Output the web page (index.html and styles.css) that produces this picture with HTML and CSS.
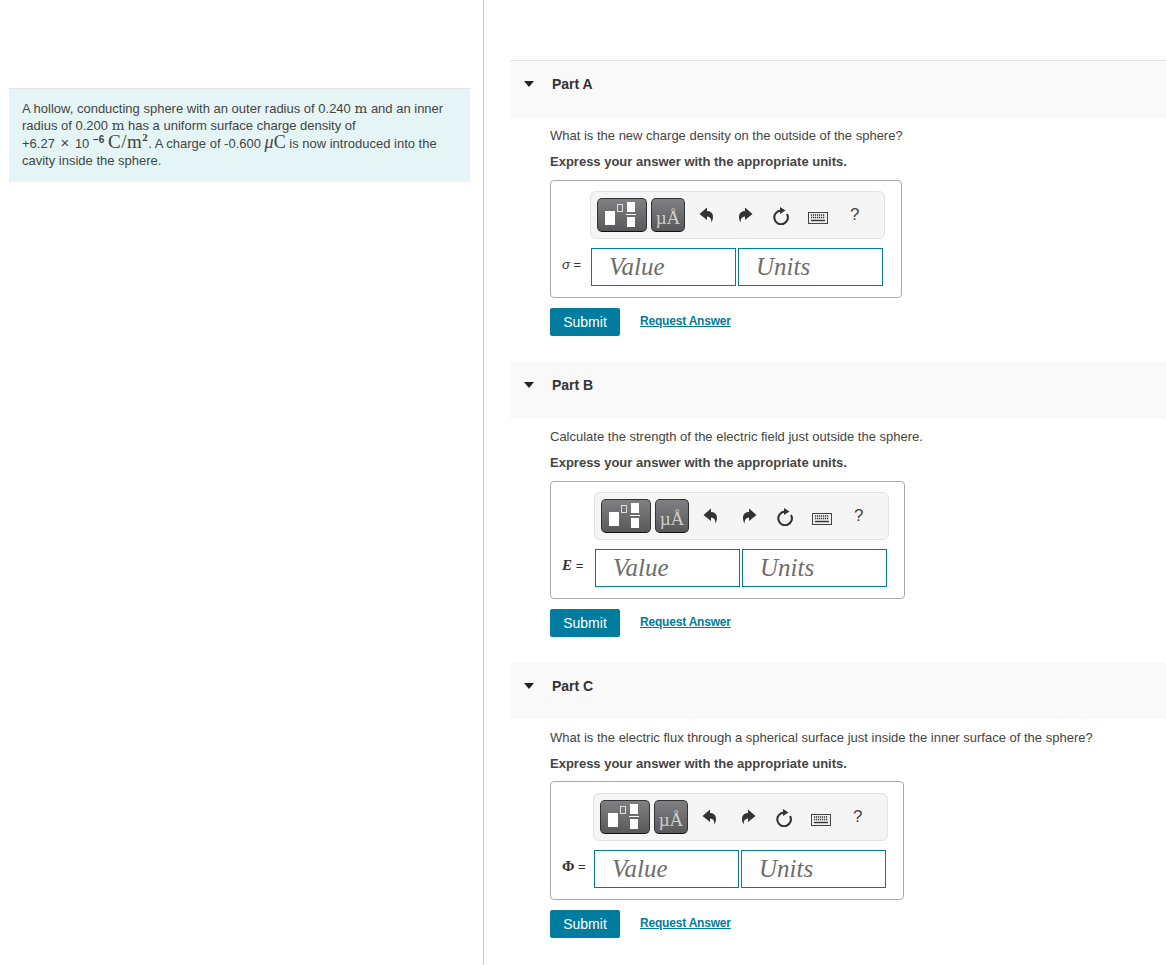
FILE: index.html
```html
<!DOCTYPE html>
<html>
<head>
    <title>Part A</title>
    <link rel="stylesheet" href="styles.css">
</head>
<body>
    <svg class="defs" width="0" height="0">
        <symbol id="undo" viewBox="0 0 16 16"><path d="M8 0.5 L0.5 7 L8 13 V9.5 C11 9.5 12.5 11.5 12.5 15.5 C15 11 15 4 8 4 Z"/></symbol>
        <symbol id="redo" viewBox="0 0 16 16"><path d="M8 0.5 L15.5 7 L8 13 V9.5 C5 9.5 3.5 11.5 3.5 15.5 C1 11 1 4 8 4 Z"/></symbol>
        <symbol id="reset" viewBox="0 0 18 18"><path d="M9 3.6 A6.8 6.8 0 1 0 15 7" fill="none" stroke="#333" stroke-width="2.1"/><path d="M8 0 L13.5 3.4 L8 7 Z"/></symbol>
        <symbol id="keys" viewBox="0 0 20 12"><rect x="0.5" y="0.5" width="19" height="11" fill="#eee" stroke="#444"/><path d="M3 3h14M3 5.5h14" stroke="#333" stroke-width="1.3" stroke-dasharray="1.2 .8"/><path d="M3 8.5h14" stroke="#333" stroke-width="1.4"/></symbol>
    </svg>

    <div class="left-pane">
        <div class="statement">
            A hollow, conducting sphere with an outer radius of 0.240 <span class="unit">m</span> and an inner radius of 0.200 <span class="unit">m</span> has a uniform surface charge density of<br>
            +6.27 <span class="times">&times;</span> 10 <sup class="exp">&minus;6</sup> <span class="unit big">C/m<sup>2</sup></span>. A charge of -0.600 <span class="unit mid"><i>&mu;</i>C</span> is now introduced into the cavity inside the sphere.
        </div>
    </div>

    <div class="right-pane">
        <section class="part part-a">
            <div class="part-head"><span class="caret"></span><span class="part-title">Part A</span></div>
            <div class="part-body">
                <p class="question">What is the new charge density on the outside of the sphere?</p>
                <p class="express">Express your answer with the appropriate units.</p>
                <div class="answer-box">
                    <div class="answer-label"><i>&sigma;</i> =</div>
                    <div class="answer-main">
                        <div class="toolbar">
                            <div class="tool-btn tpl"><span class="sq"></span><span class="sup-sq"></span><span class="frac"><b></b><em></em><b></b></span></div>
                            <div class="tool-btn mu">&micro;&Aring;</div>
                            <svg class="ic ic-undo"><use href="#undo"/></svg>
                            <svg class="ic ic-redo"><use href="#redo"/></svg>
                            <svg class="ic ic-reset"><use href="#reset"/></svg>
                            <svg class="ic ic-keys"><use href="#keys"/></svg>
                            <span class="help">?</span>
                        </div>
                        <div class="inputs"><div class="field">Value</div><div class="field">Units</div></div>
                    </div>
                </div>
                <div class="actions"><button class="submit">Submit</button><a class="req" href="#">Request Answer</a></div>
            </div>
        </section>

        <section class="part part-b">
            <div class="part-head"><span class="caret"></span><span class="part-title">Part B</span></div>
            <div class="part-body">
                <p class="question">Calculate the strength of the electric field just outside the sphere.</p>
                <p class="express">Express your answer with the appropriate units.</p>
                <div class="answer-box">
                    <div class="answer-label"><i class="serif">E</i> =</div>
                    <div class="answer-main">
                        <div class="toolbar">
                            <div class="tool-btn tpl"><span class="sq"></span><span class="sup-sq"></span><span class="frac"><b></b><em></em><b></b></span></div>
                            <div class="tool-btn mu">&micro;&Aring;</div>
                            <svg class="ic ic-undo"><use href="#undo"/></svg>
                            <svg class="ic ic-redo"><use href="#redo"/></svg>
                            <svg class="ic ic-reset"><use href="#reset"/></svg>
                            <svg class="ic ic-keys"><use href="#keys"/></svg>
                            <span class="help">?</span>
                        </div>
                        <div class="inputs"><div class="field">Value</div><div class="field">Units</div></div>
                    </div>
                </div>
                <div class="actions"><button class="submit">Submit</button><a class="req" href="#">Request Answer</a></div>
            </div>
        </section>

        <section class="part part-c">
            <div class="part-head"><span class="caret"></span><span class="part-title">Part C</span></div>
            <div class="part-body">
                <p class="question">What is the electric flux through a spherical surface just inside the inner surface of the sphere?</p>
                <p class="express">Express your answer with the appropriate units.</p>
                <div class="answer-box">
                    <div class="answer-label"><span class="serif">&Phi;</span> =</div>
                    <div class="answer-main">
                        <div class="toolbar">
                            <div class="tool-btn tpl"><span class="sq"></span><span class="sup-sq"></span><span class="frac"><b></b><em></em><b></b></span></div>
                            <div class="tool-btn mu">&micro;&Aring;</div>
                            <svg class="ic ic-undo"><use href="#undo"/></svg>
                            <svg class="ic ic-redo"><use href="#redo"/></svg>
                            <svg class="ic ic-reset"><use href="#reset"/></svg>
                            <svg class="ic ic-keys"><use href="#keys"/></svg>
                            <span class="help">?</span>
                        </div>
                        <div class="inputs"><div class="field">Value</div><div class="field">Units</div></div>
                    </div>
                </div>
                <div class="actions"><button class="submit">Submit</button><a class="req" href="#">Request Answer</a></div>
            </div>
        </section>
    </div>
</body>
</html>
```

FILE: styles.css
```css
html, body {
    margin: 0;
    padding: 0;
    height: 965px;
    overflow: hidden;
}

body {
    display: flex;
    font-family: "Liberation Sans", Arial, sans-serif;
    font-size: 13px;
    color: #333;
    background-color: #fff;
}

.defs {
    position: absolute;
}

.left-pane {
    flex-shrink: 0;
    box-sizing: border-box;
    width: 484px;
    height: 965px;
    padding-top: 88px;
    border-right: 1px solid #c8c8c8;
}

.statement {
    box-sizing: border-box;
    width: 461px;
    height: 94px;
    margin-left: 9px;
    padding: 11px 13px 0;
    background-color: #e5f5f6;
    border-top: 1px solid #dfe5e5;
    font-size: 13px;
    line-height: 17.3px;
    color: #444;
}

.unit {
    font-family: "DejaVu Serif", "Liberation Serif", serif;
    font-size: 13.5px;
    line-height: 10px;
}

.unit.big {
    font-family: "Liberation Serif", serif;
    font-size: 19px;
    letter-spacing: 0.5px;
}

.unit.mid {
    font-family: "Liberation Serif", serif;
    font-size: 18px;
}

.unit sup {
    font-size: 11px;
    font-weight: bold;
    line-height: 0;
}

.times {
    margin: 0 2px;
    font-size: 15px;
    line-height: 10px;
}

.exp {
    font-size: 10px;
    font-weight: bold;
    line-height: 0;
}

.right-pane {
    flex: 1;
    margin-left: 26px;
    padding-top: 60px;
}

.part {
    margin-bottom: 26px;
}

.part-head {
    display: flex;
    align-items: flex-start;
    box-sizing: border-box;
    height: 57px;
    padding-top: 15px;
    background-color: #f9f9f9;
}

.part-a .part-head {
    height: 58px;
    border-top: 1px solid #e0e0e0;
}

.part-c .part-head {
    height: 56px;
}

.caret {
    width: 0;
    height: 0;
    margin: 5px 0 0 14px;
    border-left: 5.5px solid transparent;
    border-right: 5.5px solid transparent;
    border-top: 6px solid #222;
}

.part-title {
    margin-left: 18px;
    font-size: 14px;
    font-weight: bold;
    line-height: 16px;
    color: #333;
}

.part-body {
    padding: 9px 0 0 40px;
}

.part-c .part-body {
    padding-top: 10px;
}

.question {
    margin: 0;
    font-size: 13px;
    line-height: 17px;
    color: #444;
}

.express {
    margin: 9px 0 10px;
    font-size: 13px;
    font-weight: bold;
    line-height: 17px;
    color: #444;
}

.part-c .express {
    margin-bottom: 9px;
}

.answer-box {
    display: inline-flex;
    align-items: flex-start;
    box-sizing: border-box;
    height: 118px;
    padding: 10px 16px 0 11px;
    border: 1px solid #aaa;
    border-radius: 4px;
    vertical-align: top;
}

.part-b .answer-box {
    padding-right: 15px;
}

.part-c .answer-box {
    height: 119px;
    padding-top: 11px;
    padding-right: 15px;
}

.answer-label {
    min-width: 28px;
    padding-top: 65px;
    font-size: 13px;
    line-height: 17px;
    color: #333;
    white-space: nowrap;
}

.serif {
    font-family: "Liberation Serif", serif;
    font-weight: bold;
    font-size: 15px;
}

.answer-main {
    width: 295px;
}

.part-b .answer-main {
    margin-left: 4px;
}

.part-c .answer-main {
    margin-left: 3px;
}

.toolbar {
    position: relative;
    box-sizing: border-box;
    width: 295px;
    height: 48px;
    background-color: #f5f5f5;
    border: 1px solid #e2e2e2;
    border-radius: 6px;
}

.tool-btn {
    position: absolute;
    top: 6px;
    box-sizing: border-box;
    height: 34px;
    background: linear-gradient(#808082, #59595b);
    border: 1px solid #333;
    border-bottom-color: #111;
    border-radius: 5px;
}

.tpl {
    left: 6px;
    width: 50px;
}

.tpl .sq {
    position: absolute;
    left: 7px;
    top: 12px;
    width: 10px;
    height: 14px;
    background-color: #fff;
}

.tpl .sup-sq {
    position: absolute;
    left: 19px;
    top: 5px;
    width: 4px;
    height: 6px;
    border: 1px solid #ddd;
}

.frac {
    position: absolute;
    left: 29px;
    top: 3px;
    width: 8px;
}

.frac b {
    display: block;
    height: 10px;
    background-color: #fff;
}

.frac em {
    display: block;
    height: 1px;
    margin: 2px -1px;
    background-color: #fff;
}

.mu {
    left: 60px;
    width: 34px;
    font-family: "Liberation Serif", serif;
    font-size: 19px;
    line-height: 37px;
    text-align: center;
    color: #ccc;
}

.ic {
    position: absolute;
    fill: #333;
}

.ic-undo {
    left: 108px;
    top: 15px;
    width: 16px;
    height: 16px;
}

.ic-redo {
    left: 146px;
    top: 15px;
    width: 16px;
    height: 16px;
}

.ic-reset {
    left: 181px;
    top: 15px;
    width: 18px;
    height: 18px;
}

.ic-keys {
    left: 217px;
    top: 20px;
    width: 20px;
    height: 12px;
}

.help {
    position: absolute;
    left: 259px;
    top: 14px;
    font-size: 17px;
    line-height: 18px;
    color: #444;
}

.inputs {
    display: flex;
    gap: 2px;
    margin: 9px 0 0 1px;
}

.field {
    box-sizing: border-box;
    width: 145px;
    height: 38px;
    padding-left: 17px;
    border: 1px solid #007c9e;
    background-color: #fff;
    font-family: "Liberation Serif", serif;
    font-style: italic;
    font-size: 25px;
    line-height: 35px;
    color: #6d6d6d;
}

.actions {
    display: flex;
    align-items: flex-start;
    margin-top: 10px;
}

.submit {
    width: 70px;
    height: 28px;
    padding: 0;
    border: none;
    border-radius: 2px;
    background-color: #007c9e;
    color: #fff;
    font-family: "Liberation Sans", Arial, sans-serif;
    font-size: 14px;
}

.req {
    margin-top: 5px;
    margin-left: 20px;
    font-size: 12px;
    font-weight: bold;
    letter-spacing: -0.2px;
    line-height: 16px;
    color: #007c9e;
}
```
